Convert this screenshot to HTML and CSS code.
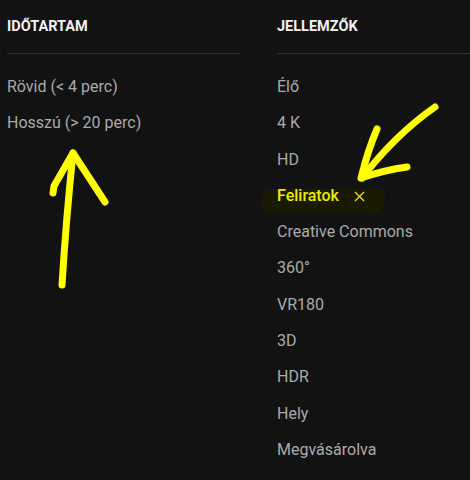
FILE: index.html
```html
<!DOCTYPE html>
<html lang="hu">
<head>
<meta charset="utf-8">
<link rel="stylesheet" href="styles.css">
</head>
<body>
<div class="filters">
  <section class="group">
    <h4 class="head">IDŐTARTAM</h4>
    <ul class="items">
      <li>Rövid (&lt; 4 perc)</li>
      <li>Hosszú (&gt; 20 perc)</li>
    </ul>
  </section>
  <section class="group">
    <h4 class="head">JELLEMZŐK</h4>
    <ul class="items">
      <li>Élő</li>
      <li>4 K</li>
      <li>HD</li>
      <li class="selected"><span class="sel-label">Feliratok</span><svg class="x" width="11" height="11" viewBox="0 0 11 11"><path d="M1 1 L10 10 M10 1 L1 10" stroke="#e8e800" stroke-width="1.3" fill="none"/></svg></li>
      <li>Creative Commons</li>
      <li>360°</li>
      <li>VR180</li>
      <li>3D</li>
      <li>HDR</li>
      <li>Hely</li>
      <li>Megvásárolva</li>
    </ul>
  </section>
</div>
<svg class="marks" width="470" height="480" viewBox="0 0 470 480">
  <g stroke="#ffff00" stroke-width="7" fill="none" stroke-linecap="round" stroke-linejoin="round">
    <path d="M62 285 Q66 220 73 153"/>
    <path d="M53 193 L54 186 L73 153 L105 202"/>
    <path d="M435 107 Q395 135 362 178"/>
    <path d="M377 129 Q368 150 361 178 Q385 170 407 167"/>
  </g>
</svg>
</body>
</html>
```
FILE: styles.css
```css
html, body {
  margin: 0;
  padding: 0;
  background: #121212;
}
body {
  width: 470px;
  height: 480px;
  overflow: hidden;
  position: relative;
  font-family: Roboto, "Noto Sans", sans-serif;
}
.filters {
  display: grid;
  grid-template-columns: 233px 1fr;
  column-gap: 37px;
  padding-left: 7px;
}
.group {
  display: flex;
  flex-direction: column;
  min-width: 0;
}
.head {
  margin: 0;
  height: 53px;
  display: flex;
  align-items: center;
  font-size: 14.5px;
  font-weight: 700;
  color: #f1f1f1;
  border-bottom: 1px solid #2e2e2e;
}
.items {
  list-style: none;
  margin: 0;
  padding: 15px 0 0 0;
}
.items li {
  height: 36.3px;
  line-height: 36.3px;
  font-size: 16px;
  color: #aaaaaa;
  white-space: nowrap;
}
.items li.selected {
  position: relative;
  display: flex;
  align-items: center;
  gap: 15px;
  color: #ecec00;
  font-weight: 500;
}
.items li.selected::before {
  content: "";
  position: absolute;
  left: -15px;
  top: 11px;
  width: 123px;
  height: 24px;
  background: #1a1a03;
  border-radius: 10px 6px 12px 8px;
  z-index: 0;
}
.sel-label, .x {
  position: relative;
  z-index: 1;
}
.marks {
  position: absolute;
  left: 0;
  top: 0;
  pointer-events: none;
}
```
